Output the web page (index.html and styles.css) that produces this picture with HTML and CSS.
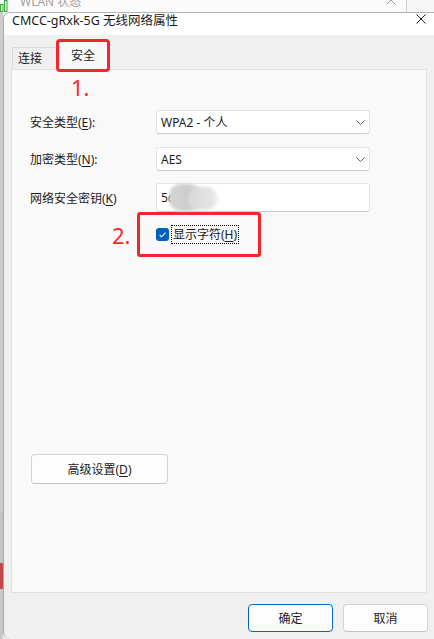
FILE: index.html
```html
<!DOCTYPE html>
<html lang="zh-CN">
<head>
  <meta charset="UTF-8" />
  <meta name="viewport" content="width=device-width, initial-scale=1.0"/>
  <title>CMCC-gRxk-5G 无线网络属性</title>
  <link rel="stylesheet" href="styles.css">
</head>
<body>
  <!-- window behind the dialog -->
  <div class="behind-bar">
    <svg class="behind-icon" width="8" height="12" viewBox="0 0 8 12">
      <rect x="0.5" y="4.5" width="2.5" height="7" fill="#dff5df" stroke="#3aa83a"/>
      <rect x="4.5" y="0.5" width="2.5" height="11" fill="#dff5df" stroke="#3aa83a"/>
    </svg>
    <span class="behind-title">WLAN 状态</span>
    <svg class="behind-close" width="10" height="10" viewBox="0 0 10 10">
      <path d="M0.5 0.5 L9.5 9.5 M9.5 0.5 L0.5 9.5" stroke="#9a9a9a" stroke-width="1"/>
    </svg>
    <span class="behind-side"></span>
  </div>

  <div class="desk">
    <div class="behind-edge">
      <div class="edge-top"></div>
      <div class="edge-mid"></div>
      <div class="edge-red"></div>
      <div class="edge-bottom"></div>
    </div>

    <div class="dialog">
      <div class="titlebar">
        <span class="title">CMCC-gRxk-5G 无线网络属性</span>
        <svg class="close" width="10" height="10" viewBox="0 0 10 10">
          <path d="M0.5 0.5 L9.5 9.5 M9.5 0.5 L0.5 9.5" stroke="#1a1a1a" stroke-width="1"/>
        </svg>
      </div>

      <div class="tabs">
        <div class="tab">连接</div>
        <div class="tab active">安全</div>
      </div>

      <div class="panel">
        <div class="mark mark-one">1.</div>

        <div class="field first">
          <label>安全类型(<u>E</u>):</label>
          <div class="select">
            <span>WPA2 - 个人</span>
            <svg width="9" height="5" viewBox="0 0 9 5"><path d="M0.5 0.5 L4.5 4.5 L8.5 0.5" fill="none" stroke="#5c5c5c"/></svg>
          </div>
        </div>

        <div class="field">
          <label>加密类型(<u>N</u>):</label>
          <div class="select">
            <span>AES</span>
            <svg width="9" height="5" viewBox="0 0 9 5"><path d="M0.5 0.5 L4.5 4.5 L8.5 0.5" fill="none" stroke="#5c5c5c"/></svg>
          </div>
        </div>

        <div class="field key-field">
          <label>网络安全密钥(<u>K</u>)</label>
          <div class="key">
            <span>5c</span>
            <span class="blur"></span>
            <span class="blur blur-b"></span>
          </div>
        </div>

        <div class="show-row">
          <span class="mark mark-two">2.</span>
          <div class="callout">
            <span class="check">
              <svg width="13" height="13" viewBox="0 0 13 13"><path d="M3.6 6.9 L5.6 8.8 L9.5 4.7" fill="none" stroke="#fff" stroke-width="1.1"/></svg>
            </span>
            <span class="focus-label">显示字符(<u>H</u>)</span>
          </div>
        </div>

        <button class="btn advanced">高级设置(<u>D</u>)</button>
      </div>

      <div class="footer">
        <button class="btn primary">确定</button>
        <button class="btn">取消</button>
      </div>
    </div>
  </div>
</body>
</html>
```

FILE: styles.css
```css
body {
  margin: 0;
  width: 434px;
  height: 639px;
  overflow: hidden;
  display: flex;
  flex-direction: column;
  font-family: 'Noto Sans', 'Noto Sans CJK SC', sans-serif;
  font-size: 12px;
  color: #1b1b1b;
  background-color: #f3f3f3;
}

u {
  text-decoration: underline;
  text-underline-offset: 2px;
}

/* window behind */
.behind-bar {
  height: 12px;
  flex: none;
  display: flex;
  align-items: flex-end;
  overflow: hidden;
  background-color: #fbfbfb;
}

.behind-title {
  margin-left: 12px;
  margin-bottom: 4px;
  line-height: 12px;
  color: #a0a0a0;
}

.behind-close {
  margin-left: auto;
  margin-bottom: 7px;
}

.behind-side {
  width: 27px;
  height: 12px;
  margin-left: 10px;
  border-left: 1px solid #cfcfcf;
  background-color: #f6f6f6;
}

.desk {
  flex: 1;
  display: flex;
  min-height: 0;
}

.behind-edge {
  width: 3px;
  display: flex;
  flex-direction: column;
}

.edge-top {
  height: 501px;
  background-color: #cdcdcd;
}

.edge-mid {
  height: 49px;
  background-color: #c4c4c4;
  border-top: 1px solid #b8b8b8;
}

.edge-red {
  height: 26px;
  background-color: #c5474c;
}

.edge-bottom {
  flex: 1;
  background-color: #c8c8c8;
}

/* dialog */
.dialog {
  flex: 1;
  display: flex;
  flex-direction: column;
  background-color: #f0f0f0;
  border-top: 1px solid #b4b4b4;
  border-left: 1px solid #a8a8a8;
  border-radius: 7px 0 0 7px;
  overflow: hidden;
}

.titlebar {
  height: 22px;
  flex: none;
  display: flex;
  align-items: flex-start;
  justify-content: space-between;
  padding: 0 8px;
  background-color: #ffffff;
}

.title {
  font-size: 12.5px;
  line-height: 15px;
  color: #1a1a1a;
}

.close {
  margin-top: 1px;
}

.tabs {
  height: 34px;
  flex: none;
  display: flex;
  align-items: flex-end;
  padding-left: 8px;
  position: relative;
  z-index: 1;
}

.tab {
  height: 21px;
  width: 38px;
  padding-left: 5px;
  line-height: 21px;
  border: 1px solid #d9d9d9;
  border-bottom: none;
}

.tab.active {
  height: 27px;
  width: 48px;
  padding-left: 0;
  margin-left: 2px;
  border: none;
  text-align: center;
  line-height: 27px;
  background-color: #f9f9f9;
  outline: 3px solid #f2262b;
  border-radius: 1px;
}

.panel {
  flex: 1;
  margin: 0 7px;
  padding-left: 18px;
  display: flex;
  flex-direction: column;
  align-items: flex-start;
  background-color: #f9f9f9;
  border: 1px solid #e2e2e2;
}

.mark {
  font-family: 'Noto Sans', sans-serif;
  font-size: 22px;
  line-height: 22px;
  color: #f42a2a;
}

.mark-one {
  margin: 6px 0 0 41px;
}

.field {
  display: flex;
  align-items: center;
  margin-top: 13px;
}

.field.first,
.field.key-field {
  margin-top: 12px;
}

.field label {
  width: 126px;
}

.select, .key {
  width: 214px;
  box-sizing: border-box;
  background-color: #ffffff;
  border: 1px solid #e4e4e4;
  border-bottom-color: #cbcbcb;
  border-radius: 3px;
}

.select {
  height: 24px;
  display: flex;
  align-items: center;
  justify-content: space-between;
  padding: 0 4px;
}

.key {
  height: 29px;
  position: relative;
  display: flex;
  align-items: center;
  padding-left: 4px;
}

.blur {
  position: absolute;
  left: 12px;
  top: 0;
  width: 32px;
  height: 27px;
  border-radius: 12px;
  background: linear-gradient(90deg, #d4d4d4, #cdcdcd 60%, #d9d9d9);
  filter: blur(1.5px);
}

.blur-b {
  left: 31px;
  top: 3px;
  width: 30px;
  height: 23px;
  background: linear-gradient(90deg, #d8d8d8, #e2e2e2 70%, #eeeeee);
}

.show-row {
  height: 45px;
  display: flex;
  align-items: center;
}

.mark-two {
  width: 25px;
  margin-left: 82px;
}

.callout {
  width: 124px;
  height: 45px;
  box-sizing: border-box;
  display: flex;
  align-items: center;
  padding-left: 16px;
  border: 3px solid #f2262b;
  border-radius: 3px;
}

.check {
  width: 13px;
  height: 13px;
  display: flex;
  border-radius: 3px;
  background-color: #005fb8;
}

.focus-label {
  margin-left: 2px;
  padding: 0 1px;
  line-height: 17px;
  border: 1px dotted #000000;
}

.btn {
  font-family: inherit;
  font-size: 12px;
  color: #1b1b1b;
  background-color: #fdfdfd;
  border: 1px solid #d3d3d3;
  border-bottom-color: #c2c2c2;
  border-radius: 4px;
  padding: 0;
}

.advanced {
  width: 137px;
  height: 30px;
  margin: 197px 0 0 1px;
}

.footer {
  height: 46px;
  flex: none;
  box-sizing: border-box;
  display: flex;
  justify-content: flex-end;
  gap: 10px;
  padding: 11px 6px 7px 0;
}

.footer .btn {
  width: 85px;
  height: 28px;
}

.btn.primary {
  border-color: #0a64bd;
}
```
